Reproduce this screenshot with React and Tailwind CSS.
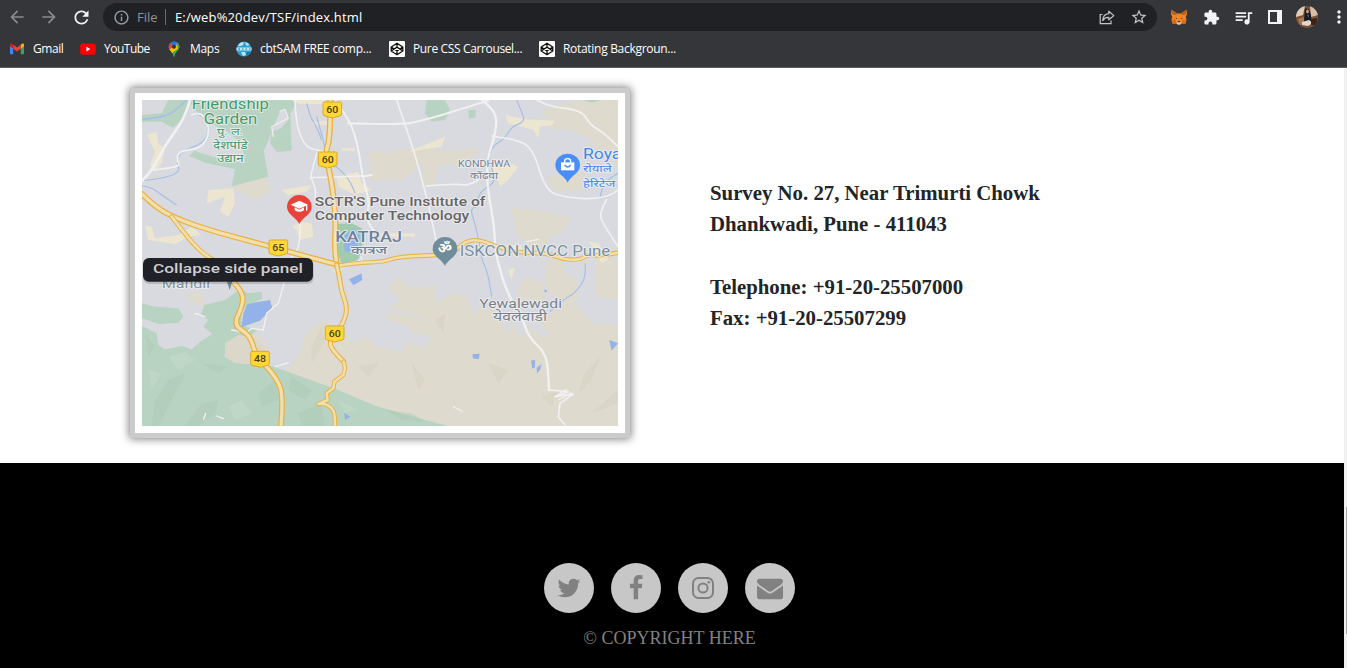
import React from "react";
import {
  MdArrowBack,
  MdArrowForward,
  MdRefresh,
  MdOutlineInfo,
  MdStarBorder,
  MdExtension,
  MdQueueMusic,
  MdMoreVert,
} from "react-icons/md";

/* ---------- toolbar drawings ---------- */

const ShareIcon = () => (
  <svg width="16" height="16" viewBox="0 0 16 16" fill="none" stroke="#c4c6c9" strokeWidth="1.2">
    <path d="M3.5 5.5H1.2V14.6H12V11.5" />
    <path d="M9.8 2.2L14.8 6.6L9.8 10.8V8.4C7 8.2 5 9.2 3.6 11.6C4 7.6 6 5 9.8 4.7Z" strokeLinejoin="round" />
  </svg>
);

const FoxIcon = () => (
  <svg width="16" height="16" viewBox="0 0 16 16">
    <path d="M0.6 0.8L6 4.4H10L15.4 0.8L16 5L14.8 8L15.6 11L14.2 15L10.6 14.2L9.4 15.4H6.6L5.4 14.2L1.8 15L0.4 11L1.2 8L0 5Z" fill="#f08525" />
    <path d="M0.6 0.8L6 4.4L5 6L1.2 5.6ZM15.4 0.8L10 4.4L11 6L14.8 5.6Z" fill="#b85f1c" />
    <path d="M5.4 12L6.6 13.2H9.4L10.6 12L10.4 14.4L9.4 15.4H6.6L5.6 14.4Z" fill="#d8c9bd" />
    <path d="M4.2 8.4L6.4 9.2L6 10ZM11.8 8.4L9.6 9.2L10 10Z" fill="#3a2a20" />
    <path d="M6.8 12.2H9.2L9.4 13.2H6.6Z" fill="#2b2220" />
    <path d="M1 10.8L4.6 10.6L5.4 14.2L1.8 15ZM15 10.8L11.4 10.6L10.6 14.2L14.2 15Z" fill="#d96c1c" />
  </svg>
);

const Avatar = () => (
  <svg width="22" height="22" viewBox="0 0 22 22">
    <defs>
      <clipPath id="avatar">
        <circle cx="11" cy="11" r="11" />
      </clipPath>
    </defs>
    <g clipPath="url(#avatar)">
      <rect width="22" height="22" fill="#7a5138" />
      <path d="M0 0H9L7 9L0 11Z" fill="#dfcdb6" />
      <path d="M14 0H22V9L15 11Z" fill="#d8bfa5" />
      <path d="M2 13L8 11L8 17L4 19Z" fill="#a97650" />
      <path d="M9 3C11 2 13.500 3 13.500 5L15 9L15.500 16H8L8.500 8Z" fill="#1a1b20" />
      <ellipse cx="11.500" cy="5.500" rx="1.400" ry="1.900" fill="#c99a80" />
      <path d="M10.500 9L13 8.500L13 12Z" fill="#2f5a76" />
      <path d="M6 16L13 14L17 17L12 20L6 19Z" fill="#e2d6cb" />
      <path d="M15 13L21 12V19H15Z" fill="#3b2219" />
    </g>
  </svg>
);

const GmailIcon = () => (
  <svg width="16" height="16" viewBox="0 0 16 16">
    <path d="M1 3.600V12.600Q1 13.300 1.700 13.300H4.200V6.300Z" fill="#4285f4" />
    <path d="M15 3.600V12.600Q15 13.300 14.300 13.300H11.800V6.300Z" fill="#34a853" />
    <path d="M11.800 4V7.700L15 5.300V4C15 2.700 13.600 2.200 12.600 2.900Z" fill="#fbbc04" />
    <path d="M4.200 7.700V3.600L8 6.500L11.800 3.600V7.700L8 10.600Z" fill="#ea4335" />
    <path d="M1 4V5.300L4.200 7.700V3.600L3.400 2.900C2.400 2.200 1 2.700 1 4Z" fill="#c5221f" />
  </svg>
);

const YouTubeIcon = () => (
  <svg width="16" height="16" viewBox="0 0 16 16">
    <rect x="0.200" y="2.500" width="15.600" height="11.200" rx="2.800" fill="#f00" />
    <path d="M6.400 5.800V10.400L10.400 8.100Z" fill="#fff" />
  </svg>
);

const MapsIcon = () => (
  <svg width="16" height="16" viewBox="0 0 16 16">
    <defs>
      <clipPath id="mapsPin">
        <path d="M8 0.500A5.300 5.300 0 0 1 13.300 5.800C13.300 9.600 9.200 10.600 8.600 15.400Q8 16.200 7.400 15.400C6.800 10.600 2.700 9.600 2.700 5.800A5.300 5.300 0 0 1 8 0.500Z" />
      </clipPath>
    </defs>
    <g clipPath="url(#mapsPin)">
      <rect width="16" height="16" fill="#34a853" />
      <path d="M2 9.500L14 -1L16 5L7.500 11L5 13Z" fill="#fbbc04" />
      <path d="M12 0L16 4V8L12 8L11 3Z" fill="#34a853" />
      <path d="M7 0H13V2L8 6L5 3Z" fill="#4285f4" />
      <path d="M0 0H5L8 5L2 9.500Z" fill="#ea4335" />
      <path d="M4 2.200L7 0.400H11L8 5Z" fill="#1a73e8" />
    </g>
    <circle cx="8" cy="5.800" r="2" fill="#35363a" />
  </svg>
);

const GlobeIcon = () => (
  <svg width="16" height="16" viewBox="0 0 16 16">
    <circle cx="8" cy="8" r="7.600" fill="#2f9fd0" />
    <path d="M4 2L7 1L8 3L5 5L2 5ZM9 1L13 3L12 5L10 4ZM5 11L9 11L10 14L7 15Z" fill="#bfe6f4" />
    <path d="M0.500 6.500H15.500V9.500H0.500Z" fill="#c3e7f3" />
    <path d="M2 7.300H4V9H2ZM6 7.300H7.500V9H6ZM9.500 7.300H11V9H9.500ZM13 7.300H14.500V9H13Z" fill="#41acd6" />
    <path d="M11 11L14 11L12 14L10 15Z" fill="#1572a6" />
  </svg>
);

const CodePenIcon = () => (
  <svg width="16" height="16" viewBox="0 0 16 16">
    <rect width="16" height="16" rx="1" fill="#fff" />
    <path
      d="M8 2.200L13.800 6V10L8 13.800L2.200 10V6ZM2.200 6L8 9.900L13.800 6M2.200 10L8 6.100L13.800 10M8 2.200V6.100M8 9.900V13.800"
      fill="none"
      stroke="#111"
      strokeWidth="1.300"
      strokeLinejoin="round"
    />
  </svg>
);

const bookmarks = [
  { label: "Gmail", icon: <GmailIcon />, box: "w-[71px]", text: "tracking-[-0.45px]" },
  { label: "YouTube", icon: <YouTubeIcon />, box: "w-[86px]", text: "tracking-[-0.5px]" },
  { label: "Maps", icon: <MapsIcon />, box: "w-[70px]", text: "tracking-[-0.3px]" },
  { label: "cbtSAM FREE comp...", icon: <GlobeIcon />, box: "w-[153px]", text: "tracking-[-0.26px]" },
  { label: "Pure CSS Carrousel...", icon: <CodePenIcon />, box: "w-[150px]", text: "tracking-[-0.36px]" },
  { label: "Rotating Backgroun...", icon: <CodePenIcon />, box: "w-[150px]", text: "tracking-[-0.3px]" },
];

const Cell = ({ children }) => (
  <div className="flex h-full w-8 shrink-0 items-center justify-center">{children}</div>
);

function BrowserChrome() {
  return (
    <header className="h-[68px] shrink-0 overflow-hidden border-b border-[#5b5c60] bg-[#35363a] font-['Open_Sans',sans-serif] text-white">
      <div className="flex h-[34px] items-center pl-px">
        <Cell><MdArrowBack size={20} color="#8a8b8e" /></Cell>
        <Cell><MdArrowForward size={20} color="#8a8b8e" /></Cell>
        <Cell><MdRefresh size={21} color="#f1f3f4" /></Cell>
        <div className="ml-1.5 flex h-7 w-[1054px] shrink-0 items-center rounded-full bg-[#202124] pl-[10px] text-[13px]">
          <MdOutlineInfo size={17} color="#9aa0a6" />
          <span className="ml-[7px] w-7 pt-px text-[#8f9398]">File</span>
          <span className="h-4 w-px bg-[#6b6d71]" />
          <span className="ml-[9px] grow pt-px tracking-[0.15px] whitespace-nowrap">E:/web%20dev/TSF/index.html</span>
          <Cell><ShareIcon /></Cell>
          <Cell><MdStarBorder size={18} color="#c4c6c9" /></Cell>
          <span className="w-0.5" />
        </div>
        <span className="w-1.5 shrink-0" />
        <Cell><FoxIcon /></Cell>
        <Cell><MdExtension size={17} color="#f1f3f4" /></Cell>
        <Cell><MdQueueMusic size={21} color="#f1f3f4" /></Cell>
        <Cell>
          <svg width="14" height="14" viewBox="0 0 14 14">
            <path d="M0 0H14V14H0ZM2 2V12H9V2Z" fill="#f1f3f4" fillRule="evenodd" />
          </svg>
        </Cell>
        <Cell><Avatar /></Cell>
        <Cell><MdMoreVert size={20} color="#f1f3f4" /></Cell>
      </div>
      <nav className="flex h-[30px] items-center pl-[9px] text-[12px]">
        {bookmarks.map((b) => (
          <div key={b.label} className={"flex shrink-0 items-center gap-2 whitespace-nowrap " + b.box}>
            <span className="shrink-0">{b.icon}</span>
            <span className={b.text}>{b.label}</span>
          </div>
        ))}
      </nav>
    </header>
  );
}

/* ---------- map ---------- */

/* Rounds the corners of "x y x y ..." polylines; several lines are separated by "|". */
const curve = (lines) =>
  lines
    .split("|")
    .map((line) => {
      const n = line.trim().split(/\s+/).map(Number);
      const p = [];
      for (let i = 0; i < n.length; i += 2) p.push([n[i], n[i + 1]]);
      let d = `M${p[0][0]} ${p[0][1]}`;
      for (let i = 1; i < p.length - 1; i++) {
        const last = i === p.length - 2;
        const ex = last ? p[i + 1][0] : (p[i][0] + p[i + 1][0]) / 2;
        const ey = last ? p[i + 1][1] : (p[i][1] + p[i + 1][1]) / 2;
        d += `Q${p[i][0]} ${p[i][1]} ${ex} ${ey}`;
      }
      if (p.length === 2) d += `L${p[1][0]} ${p[1][1]}`;
      return d;
    })
    .join("");

const Highway = ({ d, w = 15 }) => (
  <g fill="none" strokeLinejoin="round" strokeLinecap="round">
    <path d={d} stroke="#e8b040" strokeWidth={w} />
    <path d={d} stroke="#f1dfae" strokeWidth={w * 0.58} />
  </g>
);

const Shield = ({ x, y, n }) => (
  <g>
    <path
      d={`M${x - 24} ${y - 23}H${x + 24}Q${x + 28} ${y - 23} ${x + 28} ${y - 18}V${y + 13}Q${x + 28} ${y + 18} ${x + 22} ${y + 19}L${x} ${y + 25}L${x - 22} ${y + 19}Q${x - 28} ${y + 18} ${x - 28} ${y + 13}V${y - 18}Q${x - 28} ${y - 23} ${x - 24} ${y - 23}Z`}
      fill="#fdd835"
      stroke="#d9a92c"
      strokeWidth="3"
    />
    <text x={x} y={y + 9} textAnchor="middle" textLength="36" lengthAdjust="spacingAndGlyphs" fontSize="25" fontWeight="500" fill="#4a3d12">
      {n}
    </text>
  </g>
);

const Label = ({ x, y, w, size, fill, children, weight = 400 }) => (
  <text
    x={x}
    y={y}
    textLength={w}
    lengthAdjust="spacingAndGlyphs"
    fontSize={size}
    fontWeight={weight}
    fill={fill}
    stroke="#eceef1"
    strokeWidth="5"
    strokeLinejoin="round"
    paintOrder="stroke"
  >
    {children}
  </text>
);

const Pin = ({ x, y, fill, children }) => (
  <g transform={`translate(${x} ${y})`}>
    <path d="M0 -37A37 35 0 0 1 37 -2C37 22 8 30 0 50C-8 30 -37 22 -37 -2A37 35 0 0 1 0 -37Z" fill={fill} />
    {children}
  </g>
);

function CampusMap() {
  return (
    <svg
      className="block h-[326px] w-[476px]"
      viewBox="51 60 1428 978"
      preserveAspectRatio="none"
      fontFamily="Roboto, 'Noto Sans', sans-serif"
    >
      <rect x="51" y="60" width="1428" height="978" fill="#d9dadf" />

      {/* hills */}
      <g fill="#dedacd">
        <path d="M440 900L500 855L520 820L565 790L570 745L600 722L628 750L680 790L720 770L760 800L830 815L845 790L900 800L920 770L870 760L840 735L780 718L785 700L860 705L900 725L960 712L990 690L1050 700L1070 670L1120 690L1135 735L1150 770L1160 730L1180 760L1200 775L1210 740L1250 770L1275 765L1240 720L1285 700L1330 650L1360 680L1400 730L1479 735V1038H970L750 990Z" />
        <path d="M790 625L820 592L850 620L930 620L932 670L990 640L1030 650L1040 690L940 740L860 700L790 685L830 660Z" />
        <path d="M1180 620L1205 595L1255 605L1262 650L1220 680L1180 645ZM1260 540L1310 535L1320 575L1360 610L1355 660L1290 660L1262 620ZM1415 530H1479V660L1412 650Z" />
        <path d="M300 790L340 760L400 765L430 800L420 850L345 850L302 830Z" />
        <path d="M750 230L850 205L990 210L1070 205L1035 240L940 260L930 310L890 320L900 250L830 300L750 295Z" />
        <path d="M1160 385L1240 390L1340 415L1310 460L1270 470L1250 545L1200 480L1175 470ZM1260 300L1330 270L1385 280L1370 330L1290 335Z" />
        <path d="M1250 90L1370 60H1479V250L1440 240L1400 180L1340 150L1280 145ZM730 215L780 215L790 300L735 300Z" />
        <path d="M320 320L420 290L440 335L390 360ZM190 635L235 640L240 680L190 665ZM540 760L590 720L600 860L520 870Z" />
      </g>

      {/* parks and forest */}
      <g fill="#b8d3c1">
        <path d="M190 60H468L465 94L440 154L432 178L416 214L430 290L320 319L330 268L240 248L192 228L208 213L280 235L360 250L350 190L300 150L240 120L205 85Z" />
        <path d="M462 60H520L496 100L500 212L456 216L435 190L440 155L468 145L490 120L480 90L465 94Z" />
        <path d="M51 105L110 100L130 60H195L175 115L145 143L110 125L51 125Z" />
        <path d="M905 60H960L975 90L960 120L920 125L900 100ZM1030 90H1052V112L1032 116ZM1370 60H1430L1400 68Z" />
        <path d="M51 670L90 680L160 685L175 710L160 728L100 732L51 715ZM51 738L95 760L100 795L120 808L170 798L200 808L225 785L262 762L235 740L250 720L228 705L238 675L300 660L345 628L370 640L410 635L412 655L350 690L350 735L395 750L380 765L305 785L298 830L340 850L440 858L640 930L750 977L900 1020L968 1038H51Z" />
      </g>
      <path d="M300 790L340 765L385 770L420 800L415 850L330 850L300 830Z" fill="#dcd7cb" />
      <path d="M630 432L680 430L710 445L712 500L700 540L650 552L638 520Z" fill="#9fcbb0" />

      {/* terrain relief */}
      <g fill="#a9c9b4" opacity="0.35">
        <path d="M90 960L130 900L180 880L150 940L100 1038H80ZM180 1038L230 970L280 960L270 1000L220 1038ZM400 940L450 900L460 960L410 980ZM230 850L310 860L280 880ZM500 890L560 930L540 960L490 930ZM60 760L90 800L70 830Z" />
        <path d="M780 990L860 1000L900 1025L830 1020ZM520 1000L590 970L600 1038H530Z" />
      </g>
      <g fill="#c3dac9" opacity="0.6">
        <path d="M130 830L180 815L210 840L160 870ZM310 980L350 960L380 1000L330 1020ZM70 870L110 880L80 930ZM640 960L700 990L660 1000Z" />
      </g>
      <g fill="#d2cec0" opacity="0.45">
        <path d="M560 800L590 740L600 780L560 850ZM930 720L960 700L955 760ZM1380 880L1425 830L1400 900L1360 940ZM1090 850L1150 870L1120 910ZM860 850L900 900L880 930ZM1250 950L1300 930L1280 980ZM1400 1000L1479 930V970ZM700 860L760 850L730 890Z" />
      </g>

      {/* built-up patches */}
      <g fill="#ece5cf">
        <path d="M65 165L95 155L100 190L120 205L110 250L90 275L75 255L90 215ZM250 330L325 325L330 370L310 410L285 395L300 350L245 370ZM470 330L560 315L545 335L490 345ZM60 435L80 440L90 475L160 465L200 440L230 465L190 470L150 492L70 480Z" />
        <path d="M500 440L530 425L560 430L565 470L525 480L515 450ZM560 125L610 122V135H565ZM500 60H600V72H520ZM650 205H690V212H650ZM635 290L700 275L710 310L740 330L690 345L640 320ZM620 570L660 560L640 585Z" />
        <path d="M850 215L900 195L960 170L950 200ZM1140 105L1200 118L1290 122L1280 135L1245 140L1240 175L1225 150L1150 130ZM1070 245L1130 240L1180 260L1150 300L1125 320L1110 280ZM1390 485L1420 490L1450 540L1430 550L1410 510ZM1170 565L1160 600L1150 570ZM1090 495H1190V510ZM750 460H870V470H750Z" />
      </g>

      {/* water */}
      <g fill="#93b2ea">
        <path d="M368 672L435 660L442 685L405 722L350 742L355 700ZM672 598L710 580L712 600L685 616ZM655 470L685 445L705 470L690 515L660 515Z" />
        <path d="M1042 823L1064 821L1061 838L1044 835ZM1218 842L1230 840V862L1222 866ZM1235 864L1250 852L1245 870L1236 880ZM1453 780L1479 790L1460 812ZM1258 628L1268 632L1260 638ZM658 998L676 1010L660 1020Z" />
      </g>
      <g fill="none" stroke="#a5bfe8" strokeWidth="3.500" strokeLinejoin="round">
        <path d={curve("51 118 110 112 150 95 185 60")} strokeWidth="5" />
        <path d={curve("205 100 240 105 252 150 235 190 165 215 155 250 165 275 120 295 51 302 | 51 318 80 322 110 345 155 375")} />
        <path d={curve("545 70 555 110 575 140 590 180 | 575 110 595 180 600 205 | 600 240 670 275 690 340")} />
        <path d={curve("1175 60 1190 95 1200 125 1160 140 1140 175 1100 200 1090 240 1110 290 1105 310 1060 340 1060 380 1035 385 1050 430 1065 500 1070 540 1090 580 1100 650")} />
        <path d={curve("1380 550 1385 590 1350 640 1320 655 1275 695 | 1425 355 1430 320 1460 290 1479 280")} />
      </g>

      {/* minor roads */}
      <g fill="none" stroke="#f1f1f1" strokeLinejoin="round" strokeLinecap="round">
        <path d={curve("195 60 180 115 120 195 80 275 51 302")} strokeWidth="8" />
        <path d={curve("200 105 225 95 247 125 252 160 230 205 162 213 155 240 168 262 80 270")} strokeWidth="5" />
        <path d={curve("510 60 512 120 530 180 555 210 610 215 | 575 220 565 260 555 290 575 330 570 360 | 525 430 528 515 500 530 | 555 293 710 288")} strokeWidth="4.500" />
        <path d={curve("630 60 675 120 700 200 712 290 735 370 720 420 745 450 | 670 130 830 135 900 120 1000 90 1090 62 | 712 290 740 285")} strokeWidth="6" />
        <path d={curve("815 60 860 190 900 330 925 440 935 490")} strokeWidth="5" />
        <path d={curve("1070 60 1112 90 1115 150 1085 240 1088 330 1108 440 1110 510 1130 590 1155 655 1195 720 1210 770 1262 820 1270 880 1272 930")} strokeWidth="7" />
        <path d="M1272 930L1330 935L1290 950L1345 942L1305 970L1300 1010L1320 1035" strokeWidth="5" />
        <path d={curve("1100 168 1180 178 1225 210 1255 310 1290 350 1445 360 1479 330 | 905 318 990 310 1030 318 1060 300 | 1445 360 1420 400 1440 440 1479 500 | 1235 60 1270 80 1370 90 1395 135 1440 160 1479 200")} strokeWidth="5" />
        <path d="M480 600L460 670L425 700L415 750L380 745L365 758L320 750M450 860L490 848M210 700L240 710" strokeWidth="4" />
        <path d="M1290 950L1325 928M1300 960L1340 938M985 980L1012 994M445 170L440 140L490 115L480 88L465 94M1205 485L1240 478" strokeWidth="3.500" />
        <path d="M700 540L712 550L708 530M236 1018L242 1000M275 1008L295 1016" strokeWidth="4" />
      </g>

      {/* highways */}
      <Highway d={curve("616 60 616 170 602 215 608 250 624 330 633 430 628 500 635 555")} w={18} />
      <Highway d={curve("51 342 85 375 140 410 250 450 450 503 640 555")} w={17} />
      <Highway d={curve("140 410 170 450 230 520 265 540")} w={14} />
      <Highway d={curve("640 557 700 548 775 546 820 530 930 526 985 518 1020 485 1060 478 1110 498 1180 518 1270 520 1320 540 1370 538 1390 522 1430 528 1479 518")} w={13} />
      <Highway d={curve("635 555 643 585 648 630 668 685 655 730 628 765 612 790 630 820 656 845")} w={15} />
      <Highway d="M656 845L660 865L655 885L628 905L625 925L605 940L608 960L580 972Q610 968 625 992Q630 1000 630 1038" w={13} />
      <Highway d={curve("315 595 355 635 352 680 325 735 375 765 390 820 420 855 455 895 475 945 468 1038")} w={17} />

      <Shield x={622} y={89} n="60" />
      <Shield x={608} y={239} n="60" />
      <Shield x={460} y={503} n="65" />
      <Shield x={629} y={761} n="60" />
      <Shield x={405} y={837} n="48" />

      {/* place names */}
      <Label x={200} y={87} w={232} size={43} fill="#419a64">Friendship</Label>
      <Label x={236} y={132} w={161} size={43} fill="#419a64">Garden</Label>
      <Label x={276} y={165} w={78} size={29} fill="#419a64">पु. ल.</Label>
      <Label x={264} y={206} w={104} size={31} fill="#419a64">देशपांडे</Label>
      <Label x={276} y={245} w={80} size={31} fill="#419a64">उद्यान</Label>
      <Label x={999} y={261} w={157} size={25} fill="#747f8c">KONDHWA</Label>
      <Label x={1035} y={296} w={84} size={27} fill="#747f8c">कोंढवा</Label>
      <Label x={1374} y={236} w={128} size={42} fill="#4183ed">Royal</Label>
      <Label x={1374} y={277} w={86} size={30} fill="#4183ed">रोयाले</Label>
      <Label x={1374} y={320} w={97} size={30} fill="#4183ed">हेरिटेज</Label>
      <Label x={569} y={379} w={512} size={36} fill="#686464" weight={500}>SCTR'S Pune Institute of</Label>
      <Label x={569} y={419} w={464} size={36} fill="#686464" weight={500}>Computer Technology</Label>
      <Label x={631} y={486} w={200} size={44} fill="#6e7f96" weight={500}>KATRAJ</Label>
      <Label x={678} y={521} w={108} size={32} fill="#6e7f96" weight={500}>कात्रज</Label>
      <Label x={1004} y={527} w={452} size={42} fill="#78909c">ISKCON NVCC Pune</Label>
      <Label x={1063} y={684} w={248} size={39} fill="#7b8087">Yewalewadi</Label>
      <Label x={1104} y={724} w={162} size={36} fill="#7b8087">येवलेवाडी</Label>
      <Label x={110} y={624} w={150} size={40} fill="#8496a3">Mandir</Label>

      {/* pins */}
      <Pin x={523} y={382} fill="#e8423a">
        <path d="M-26 -8L0 -20L26 -8L0 4ZM-14 0L0 7L14 0V9Q0 18 -14 9ZM20 -6H24V10H20Z" fill="#fff" />
      </Pin>
      <Pin x={1328} y={258} fill="#4a8df6">
        <path d="M-20 -11H20V13H-20Z" fill="#fff" />
        <path d="M-9 -10V-14A9 8 0 0 1 9 -14V-10" fill="none" stroke="#fff" strokeWidth="4" />
        <path d="M-9 -3Q0 9 9 -3" fill="none" stroke="#4a8df6" strokeWidth="4" />
      </Pin>
      <Pin x={960} y={508} fill="#6f8c99">
        <text x="0" y="12" textAnchor="middle" fontSize="42" fontWeight="700" fill="#fff">ॐ</text>
      </Pin>
      <path d="M298 580H330L314 630Z" fill="#6f8c99" />

      {/* tooltip */}
      <rect x="54" y="540" width="512" height="72" rx="18" fill="#000" opacity="0.150" />
      <rect x="54" y="534" width="510" height="71" rx="18" fill="#202126" />
      <text x="84" y="580" textLength="450" lengthAdjust="spacingAndGlyphs" fontSize="41" fontWeight="500" fill="#cfd0d4">
        Collapse side panel
      </text>
    </svg>
  );
}

/* ---------- footer ---------- */

const Glyph = ({ d, w = 1792 }) => (
  <svg height="26" width={(w * 26) / 1792} viewBox={`0 0 ${w} 1792`} fill="#818181">
    <path d={d} />
  </svg>
);

const socials = [
  {
    name: "Twitter",
    icon: (
      <Glyph d="M1684 408q-67 98-162 167 1 14 1 42 0 130-38 259.500t-115.500 248.500-184.500 210.500-258 146-323 54.500q-271 0-496-145 35 4 78 4 225 0 401-138-105-2-188-64.500t-114-159.500q33 5 61 5 43 0 85-11-112-23-185.500-111.500t-73.500-205.500v-4q68 38 146 41-66-44-105-115t-39-154q0-88 44-163 121 149 294.500 238.500t371.500 99.500q-8-38-8-74 0-134 94.500-228.500t228.500-94.500q140 0 236 102 109-21 205-78-37 115-142 178 93-10 186-50z" />
    ),
  },
  {
    name: "Facebook",
    icon: (
      <Glyph d="M1343 12v264h-157q-86 0-116 36t-30 108v189h293l-39 296h-254v759h-306v-759h-255v-296h255v-218q0-186 104-288.500t277-102.500q147 0 228 12z" />
    ),
  },
  {
    name: "Instagram",
    icon: (
      <svg width="22" height="22" viewBox="0 0 22 22" fill="none" stroke="#818181" strokeWidth="2">
        <rect x="1" y="1" width="20" height="20" rx="5.500" />
        <circle cx="11" cy="11" r="4.600" />
        <circle cx="16.800" cy="5.200" r="1.300" fill="#818181" stroke="none" />
      </svg>
    ),
  },
  {
    name: "Email",
    icon: (
      <Glyph d="M1792 710v794q0 66-47 113t-113 47h-1472q-66 0-113-47t-47-113v-794q44 49 101 87 362 246 497 345 57 42 92.500 65.500t94.500 48 110 24.500h2q51 0 110-24.500t94.500-48 92.500-65.500q170-123 498-345 57-39 100-87zm0-294q0 79-49 151t-122 123q-376 261-468 325-10 7-42.500 31t-54 38.500-52 32.500-57.500 27-50 9h-2q-23 0-50-9t-57.500-27-52-32.500-54-38.500-42.500-31q-91-64-262-182.500t-205-142.500q-62-42-117-115.500t-55-136.500q0-78 41.500-130t118.500-52h1472q65 0 112.500 47t47.500 113z" />
    ),
  },
];

export default function App() {
  return (
    <div className="flex h-[668px] w-[1347px] flex-col overflow-hidden bg-white">
      <BrowserChrome />
      <div className="flex h-[600px]">
        <main className="flex w-[1344px] flex-col">
          <section className="flex h-[395px] items-start pl-[130px] pt-5">
            <div className="h-[350px] w-[500px] shrink-0 rounded-[3px] border-[5px] border-[#cbcbcb] bg-white p-[7px] shadow-[0_0_8px_1px_rgba(0,0,0,0.5)]">
              <CampusMap />
            </div>
            <address className="ml-20 mt-[89px] font-['Liberation_Serif',serif] text-[20.8px] leading-[31.25px] font-bold text-[#212529] not-italic">
              <p>Survey No. 27, Near Trimurti Chowk</p>
              <p>Dhankwadi, Pune - 411043</p>
              <p className="mt-[31.25px]">Telephone: +91-20-25507000</p>
              <p>Fax: +91-20-25507299</p>
            </address>
          </section>
          <footer className="flex h-[205px] flex-col items-center bg-black pt-[100px] pr-[5px]">
            <div className="flex gap-[17px]">
              {socials.map((s) => (
                <span key={s.name} className="flex size-[50px] items-center justify-center rounded-full bg-[#c7c7c7]">
                  {s.icon}
                </span>
              ))}
            </div>
            <p className="mt-3 font-['Liberation_Serif',serif] text-[18px] leading-[26px] whitespace-nowrap text-[#818181]">
              © COPYRIGHT HERE
            </p>
          </footer>
        </main>
        <div className="flex w-[3px] justify-end bg-[#f1f1f1] pt-[439px]">
          <div className="h-[127px] w-px bg-[#a8a8a8]" />
        </div>
      </div>
    </div>
  );
}
